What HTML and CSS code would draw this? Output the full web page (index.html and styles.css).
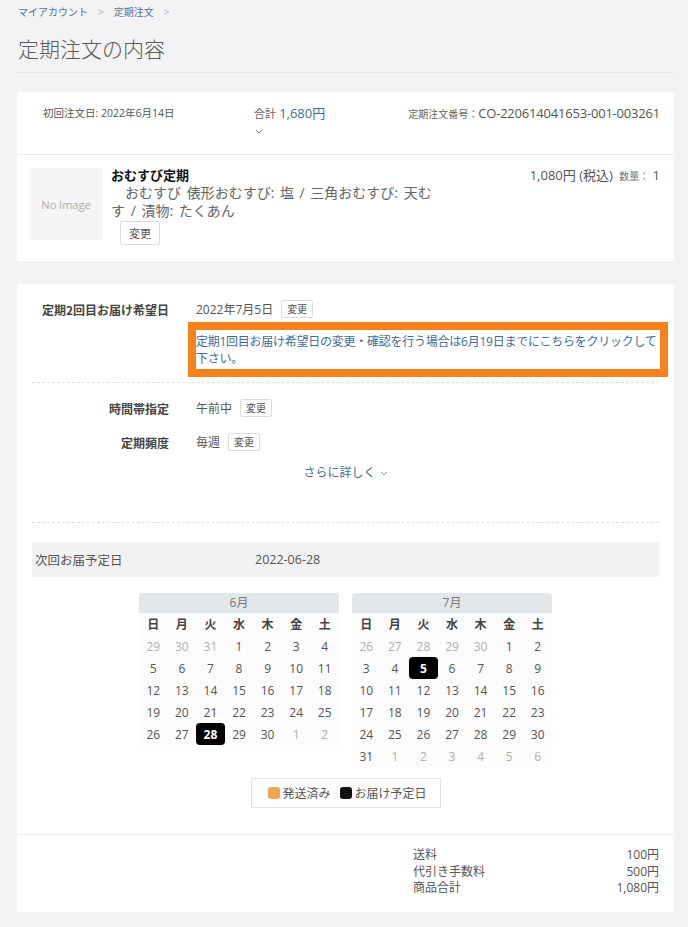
FILE: index.html
```html
<!DOCTYPE html>
<html lang="ja">
<head>
<meta charset="utf-8">
<title>定期注文の内容</title>
<link rel="stylesheet" href="styles.css">
</head>
<body>
<div class="page">
  <nav class="breadcrumb">
    <a class="crumb">マイアカウント</a><span class="sep">&gt;</span><a class="crumb">定期注文</a><span class="sep">&gt;</span>
  </nav>
  <h1 class="title">定期注文の内容</h1>

  <section class="card">
    <div class="order-head">
      <div class="first-date">初回注文日: 2022年6月14日</div>
      <div class="total">
        <div><span class="total-label">合計</span> <span class="total-value">1,680円</span></div>
        <svg class="chev" width="8" height="5" viewBox="0 0 8 5"><path d="M1 1l3 3 3-3" fill="none" stroke="#8a8a8a" stroke-width="1"/></svg>
      </div>
      <div class="order-no"><span class="no-label">定期注文番号：</span><span class="no-value">CO-220614041653-001-003261</span></div>
    </div>
    <div class="product">
      <div class="thumb">No Image</div>
      <div class="info">
        <div class="pname">おむすび定期</div>
        <div class="opts">おむすび 俵形おむすび: 塩 / 三角おむすび: 天むす / 漬物: たくあん</div>
        <button class="btn btn-lg">変更</button>
      </div>
      <div class="price">1,080円 (税込) <span class="qty-label">数量：</span> 1</div>
    </div>
  </section>

  <section class="card">
    <div class="schedule">
      <div class="group group-a">
        <div class="field">
          <div class="label">定期2回目お届け希望日</div>
          <div class="value">2022年7月5日 <button class="btn">変更</button></div>
        </div>
        <div class="notice"><a class="notice-link">定期1回目お届け希望日の変更・確認を行う場合は6月19日までにこちらをクリックして下さい。</a></div>
      </div>
      <div class="group group-b">
        <div class="field">
          <div class="label">時間帯指定</div>
          <div class="value">午前中 <button class="btn">変更</button></div>
        </div>
        <div class="field">
          <div class="label">定期頻度</div>
          <div class="value">毎週 <button class="btn">変更</button></div>
        </div>
        <div class="more"><a class="more-link">さらに詳しく</a><svg class="chev" width="8" height="5" viewBox="0 0 8 5"><path d="M1 1l3 3 3-3" fill="none" stroke="#8a9bb0" stroke-width="1"/></svg></div>
      </div>

      <div class="next">
        <span class="next-label">次回お届予定日</span><span class="next-value">2022-06-28</span>
      </div>

      <div class="calendars">
        <div class="cal">
          <div class="cal-head">6月</div>
          <div class="cal-grid">
            <span class="dow">日</span><span class="dow">月</span><span class="dow">火</span><span class="dow">水</span><span class="dow">木</span><span class="dow">金</span><span class="dow">土</span>
            <span class="d off">29</span><span class="d off">30</span><span class="d off">31</span><span class="d">1</span><span class="d">2</span><span class="d">3</span><span class="d">4</span>
            <span class="d">5</span><span class="d">6</span><span class="d">7</span><span class="d">8</span><span class="d">9</span><span class="d">10</span><span class="d">11</span>
            <span class="d">12</span><span class="d">13</span><span class="d">14</span><span class="d">15</span><span class="d">16</span><span class="d">17</span><span class="d">18</span>
            <span class="d">19</span><span class="d">20</span><span class="d">21</span><span class="d">22</span><span class="d">23</span><span class="d">24</span><span class="d">25</span>
            <span class="d">26</span><span class="d">27</span><span class="d sel">28</span><span class="d">29</span><span class="d">30</span><span class="d off">1</span><span class="d off">2</span>
          </div>
        </div>
        <div class="cal">
          <div class="cal-head">7月</div>
          <div class="cal-grid">
            <span class="dow">日</span><span class="dow">月</span><span class="dow">火</span><span class="dow">水</span><span class="dow">木</span><span class="dow">金</span><span class="dow">土</span>
            <span class="d off">26</span><span class="d off">27</span><span class="d off">28</span><span class="d off">29</span><span class="d off">30</span><span class="d">1</span><span class="d">2</span>
            <span class="d">3</span><span class="d">4</span><span class="d sel">5</span><span class="d">6</span><span class="d">7</span><span class="d">8</span><span class="d">9</span>
            <span class="d">10</span><span class="d">11</span><span class="d">12</span><span class="d">13</span><span class="d">14</span><span class="d">15</span><span class="d">16</span>
            <span class="d">17</span><span class="d">18</span><span class="d">19</span><span class="d">20</span><span class="d">21</span><span class="d">22</span><span class="d">23</span>
            <span class="d">24</span><span class="d">25</span><span class="d">26</span><span class="d">27</span><span class="d">28</span><span class="d">29</span><span class="d">30</span>
            <span class="d">31</span><span class="d off">1</span><span class="d off">2</span><span class="d off">3</span><span class="d off">4</span><span class="d off">5</span><span class="d off">6</span>
          </div>
        </div>
      </div>

      <div class="legend-wrap">
        <div class="legend">
          <span class="sw sw-shipped"></span><span class="lg-text">発送済み</span>
          <span class="sw sw-plan"></span><span class="lg-text">お届け予定日</span>
        </div>
      </div>
    </div>

    <div class="totals">
      <dl class="sum">
        <dt>送料</dt><dd>100円</dd>
        <dt>代引き手数料</dt><dd>500円</dd>
        <dt>商品合計</dt><dd>1,080円</dd>
      </dl>
    </div>
  </section>
</div>
</body>
</html>
```

FILE: styles.css
```css
* { box-sizing: border-box; }
html, body { margin: 0; padding: 0; }
body {
  background: #f3f3f5;
  font-family: "Open Sans", "Noto Sans CJK JP", sans-serif;
  color: #555;
  font-size: 12px;
}
.page { padding: 0 14px 15px 17px; }

.breadcrumb {
  display: flex;
  align-items: center;
  padding: 5px 0 0 1px;
  height: 19px;
  font-size: 10px;
  line-height: 14px;
}
.crumb { color: #4f7396; }
.sep { color: #a9b3bd; margin: 0 10px 0 10px; }

.title {
  margin: 0;
  padding: 17px 0 0 1px;
  font-size: 21px;
  line-height: 26px;
  font-weight: 300;
  color: #5a5a5a;
  height: 54px;
  border-bottom: 1px solid #e6e6e8;
}

.card {
  background: #fff;
  margin-top: 19px;
}
.card + .card { margin-top: 23px; }

.order-head {
  display: grid;
  grid-template-columns: 211px auto 1fr;
  align-items: start;
  height: 63px;
  padding: 13px 14px 0 26px;
  border-bottom: 1px solid #e8e8e8;
}
.first-date { font-size: 10.5px; line-height: 16px; color: #555; }
.total { display: flex; flex-direction: column; align-items: flex-start; }
.total > div { line-height: 16px; }
.total-label { font-size: 11px; color: #666; }
.total-value { font-size: 13px; color: #3f6d97; }
.total .chev { margin: 7px 0 0 1px; }
.order-no { justify-self: end; line-height: 16px; }
.no-label { font-size: 10px; color: #666; }
.no-value { font-size: 13px; color: #555; letter-spacing: -0.2px; }

.product {
  display: grid;
  grid-template-columns: 72px 330px 1fr;
  column-gap: 9px;
  padding: 13px 14px 16px 13px;
}
.thumb {
  width: 72px;
  height: 72px;
  background: #f5f5f5;
  color: #aaa;
  font-size: 11px;
  display: flex;
  align-items: center;
  justify-content: center;
}
.info { display: flex; flex-direction: column; align-items: flex-start; }
.pname { font-size: 13px; font-weight: 700; color: #111; line-height: 15px; }
.opts { font-size: 14px; line-height: 18px; color: #666; text-indent: 14px; word-spacing: 2px; margin-top: 1px; }
.price { justify-self: end; font-size: 13px; line-height: 15px; color: #555; white-space: nowrap; }
.qty-label { font-size: 10px; color: #777; margin-left: 3px; }

.btn {
  font-family: "Noto Sans CJK JP", sans-serif;
  background: #fff;
  border: 1px solid #dcdcdc;
  border-radius: 2px;
  color: #555;
  font-size: 10px;
  line-height: 16px;
  height: 18px;
  padding: 0 5px;
  margin-left: 8px;
  cursor: pointer;
}
.btn-lg {
  font-size: 11px;
  height: 24px;
  padding: 0 8px;
  margin: 1px 0 0 9px;
}

.schedule { padding: 15px 15px 0; }
.group-a { padding-bottom: 5px; border-bottom: 1px dashed #e2e2e2; }
.group-b { padding: 15px 0 40px; border-bottom: 1px dashed #e2e2e2; }
.field {
  display: grid;
  grid-template-columns: 137px 1fr;
  column-gap: 27px;
  align-items: center;
  height: 20px;
}
.group-b .field + .field { margin-top: 14px; }
.label { text-align: right; font-weight: 700; font-size: 12px; color: #444; font-family: "Noto Sans CJK JP", sans-serif; }
.value { display: flex; align-items: center; font-size: 12px; color: #555; }

.notice {
  margin: 3px -9px 0 156px;
  border: 8px solid #f5821f;
  padding: 3px 0 2px;
  font-size: 12px;
  line-height: 17px;
  letter-spacing: -0.25px;
}
.notice-link { color: #3f6d97; }

.more {
  margin-top: 12px;
  display: flex;
  justify-content: center;
  align-items: center;
  gap: 4px;
  line-height: 18px;
  font-size: 12px;
}
.more-link { color: #3f6d97; }

.next {
  margin-top: 19px;
  height: 35px;
  background: #f2f2f2;
  display: flex;
  align-items: center;
  padding-left: 3px;
  font-size: 12.5px;
  color: #555;
}
.next-label { width: 220px; }

.calendars {
  margin-top: 16px;
  display: flex;
  justify-content: center;
  align-items: flex-start;
  gap: 13px;
}
.cal { width: 200px; }
.cal-head {
  height: 20px;
  background: #e4e7ea;
  border-radius: 3px 3px 0 0;
  text-align: center;
  line-height: 20px;
  font-size: 12px;
  color: #777;
}
.cal-grid {
  display: grid;
  grid-template-columns: repeat(7, 1fr);
  grid-auto-rows: 22px;
  background: #fbfbfb;
}
.cal-grid span {
  display: flex;
  align-items: center;
  justify-content: center;
  font-size: 12px;
}
.dow { font-weight: 700; color: #444; }
.d { color: #555; }
.d.off { color: #b0b0b0; }
.d.sel { background: #000; color: #fff; border-radius: 4px; font-weight: 700; }

.legend-wrap { display: flex; justify-content: center; margin-top: 11px; padding-bottom: 26px; }
.legend {
  width: 190px;
  height: 30px;
  border: 1px solid #e2e2e2;
  display: flex;
  align-items: center;
  padding-left: 16px;
  font-size: 12px;
  color: #555;
}
.sw { width: 12px; height: 12px; border-radius: 3px; display: inline-block; margin-right: 3px; }
.sw-shipped { background: #f3a64f; }
.sw-plan { background: #111; margin-left: 9px; }

.totals { border-top: 1px solid #ececec; padding: 12px 15px 15px; }
.sum {
  margin: 0 0 0 auto;
  width: 246px;
  display: grid;
  grid-template-columns: 1fr auto;
  line-height: 16.5px;
  font-size: 12px;
  color: #555;
}
.sum dt, .sum dd { margin: 0; }
.sum dd { text-align: right; }
```
